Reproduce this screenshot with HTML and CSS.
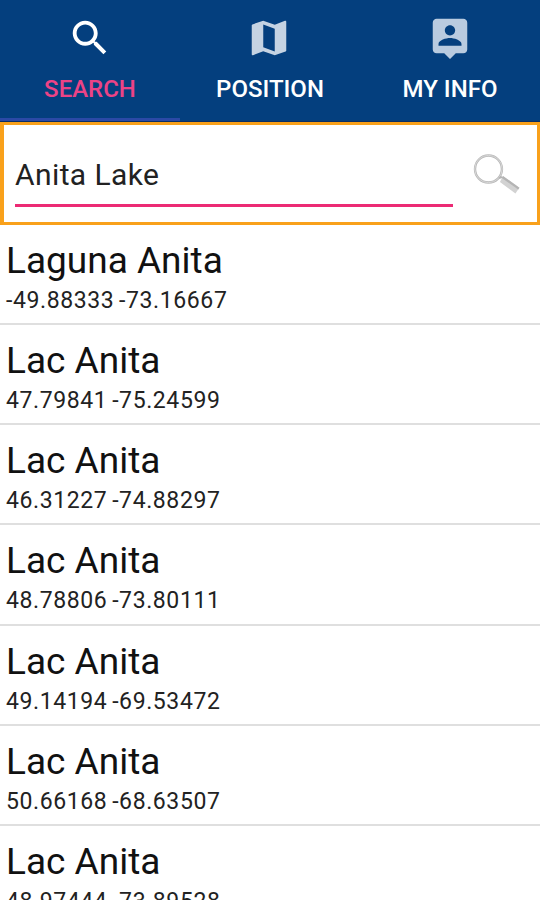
FILE: index.html
```html
<!DOCTYPE html>
<html lang="en">
<head>
    <meta charset="UTF-8">
    <title>Lake Search</title>

    <link rel="stylesheet" href="styles.css">
</head>

<body>

<div id="container">

    <nav class="tabs">
        <a class="tab active">
            <svg class="tabIcon" viewBox="0 0 24 24">
                <path d="M15.5 14h-.79l-.28-.27C15.41 12.59 16 11.11 16 9.5 16 5.91 13.09 3 9.5 3S3 5.91 3 9.5 5.91 16 9.5 16c1.61 0 3.09-.59 4.23-1.57l.27.28v.79l5 4.99L20.49 19l-4.99-5zm-6 0C7.01 14 5 11.99 5 9.5S7.01 5 9.5 5 14 7.01 14 9.5 11.99 14 9.5 14z"/>
            </svg>
            <span class="tabLabel">SEARCH</span>
        </a>
        <a class="tab">
            <svg class="tabIcon map" viewBox="0 0 24 24">
                <path d="M20.5 3l-.16.03L15 5.1 9 3 3.36 4.9c-.21.07-.36.25-.36.48V20.5c0 .28.22.5.5.5l.16-.03L9 18.9l6 2.1 5.64-1.9c.21-.07.36-.25.36-.48V3.5c0-.28-.22-.5-.5-.5zM15 19l-6-2.11V5l6 2.11V19z"/>
            </svg>
            <span class="tabLabel">POSITION</span>
        </a>
        <a class="tab">
            <svg class="tabIcon" viewBox="0 0 24 24">
                <path d="M19 2H5c-1.11 0-2 .9-2 2v14c0 1.1.89 2 2 2h4l3 3 3-3h4c1.1 0 2-.9 2-2V4c0-1.1-.9-2-2-2zm-7 3.3c1.49 0 2.7 1.21 2.7 2.7s-1.21 2.7-2.7 2.7S9.3 9.49 9.3 8s1.21-2.7 2.7-2.7zM18 16H6v-.9c0-2 4-3.1 6-3.1s6 1.1 6 3.1v.9z"/>
            </svg>
            <span class="tabLabel">MY INFO</span>
        </a>
    </nav>

    <form class="searchBox">
        <input class="searchInput" type="text" value="Anita Lake">
        <svg class="searchIcon" viewBox="0 0 48 42">
            <circle cx="15.5" cy="16" r="13.5" fill="none" stroke="#b9b9b9" stroke-width="2.4"/>
            <circle cx="15.5" cy="16" r="13.7" fill="none" stroke="#dedede" stroke-width="0.8"/>
            <path d="M26 25l3-1" stroke="#b5b5b5" stroke-width="2"/>
            <path d="M30 23L46.5 34.8 42.5 40.5 27 29z" fill="#d2d2d2"/>
            <path d="M30 23L46.5 34.8 45.3 36.5 28.8 25z" fill="#b4b4b4"/>
        </svg>
    </form>

    <div class="results">
        <div class="result">
            <div class="name">Laguna Anita</div>
            <div class="coords">-49.88333 -73.16667</div>
        </div>
        <div class="result">
            <div class="name">Lac Anita</div>
            <div class="coords">47.79841 -75.24599</div>
        </div>
        <div class="result">
            <div class="name">Lac Anita</div>
            <div class="coords">46.31227 -74.88297</div>
        </div>
        <div class="result">
            <div class="name">Lac Anita</div>
            <div class="coords">48.78806 -73.80111</div>
        </div>
        <div class="result">
            <div class="name">Lac Anita</div>
            <div class="coords">49.14194 -69.53472</div>
        </div>
        <div class="result">
            <div class="name">Lac Anita</div>
            <div class="coords">50.66168 -68.63507</div>
        </div>
        <div class="result">
            <div class="name">Lac Anita</div>
            <div class="coords">48.97444 -73.89528</div>
        </div>
    </div>

</div> <!-- end container -->

</body>
</html>
```
FILE: styles.css
```css
* {
    box-sizing: border-box;
}

body {
    margin: 0;
    background-color: white;
    font-family: Roboto, sans-serif;
    color: #111;
}

#container {
    height: 900px;
    overflow: hidden;
}

/* Tabs */
.tabs {
    display: flex;
    height: 122px;
    background-color: #043f7e;
    border-bottom: 1px solid #0b2f66;
}

.tab {
    flex: 1;
    display: flex;
    flex-direction: column;
    align-items: center;
    padding-top: 15px;
    color: white;
    border-bottom: 3px solid transparent;
}

.tab.active {
    color: #ec4386;
    border-bottom-color: #2b49a6;
}

.tabIcon {
    width: 46px;
    height: 46px;
    fill: #b9cbe0;
}

.tabIcon.map {
    margin-right: 2px;
    fill: #c5d3e3;
}

.active .tabIcon {
    fill: white;
}

.tabLabel {
    margin-top: 14px;
    font-size: 24px;
    line-height: 28px;
    font-weight: 500;
}

/* Search box */
.searchBox {
    display: flex;
    height: 103px;
    padding: 23px 16px 0 11px;
    border: 3px solid #f9a11b;
    border-width: 3px 3px 3px 4px;
}

.searchInput {
    width: 439px;
    height: 59px;
    padding: 0 0 3px;
    border: 0;
    border-bottom: 3px solid #ec2a74;
    outline: none;
    background: none;
    font-family: inherit;
    font-size: 30px;
    letter-spacing: 0.4px;
    color: #222;
}

.searchIcon {
    width: 48px;
    height: 42px;
    margin: 5px 0 0 20px;
}

/* Results */
.result {
    height: 100.15px;
    padding: 14px 6px 0;
    border-bottom: 2px solid #dfdfdf;
}

.name {
    font-size: 37px;
    line-height: 44px;
}

.coords {
    font-size: 23px;
    line-height: 26px;
    margin-top: 5px;
    letter-spacing: 0.6px;
    word-spacing: -1.5px;
    color: #222;
}
```
